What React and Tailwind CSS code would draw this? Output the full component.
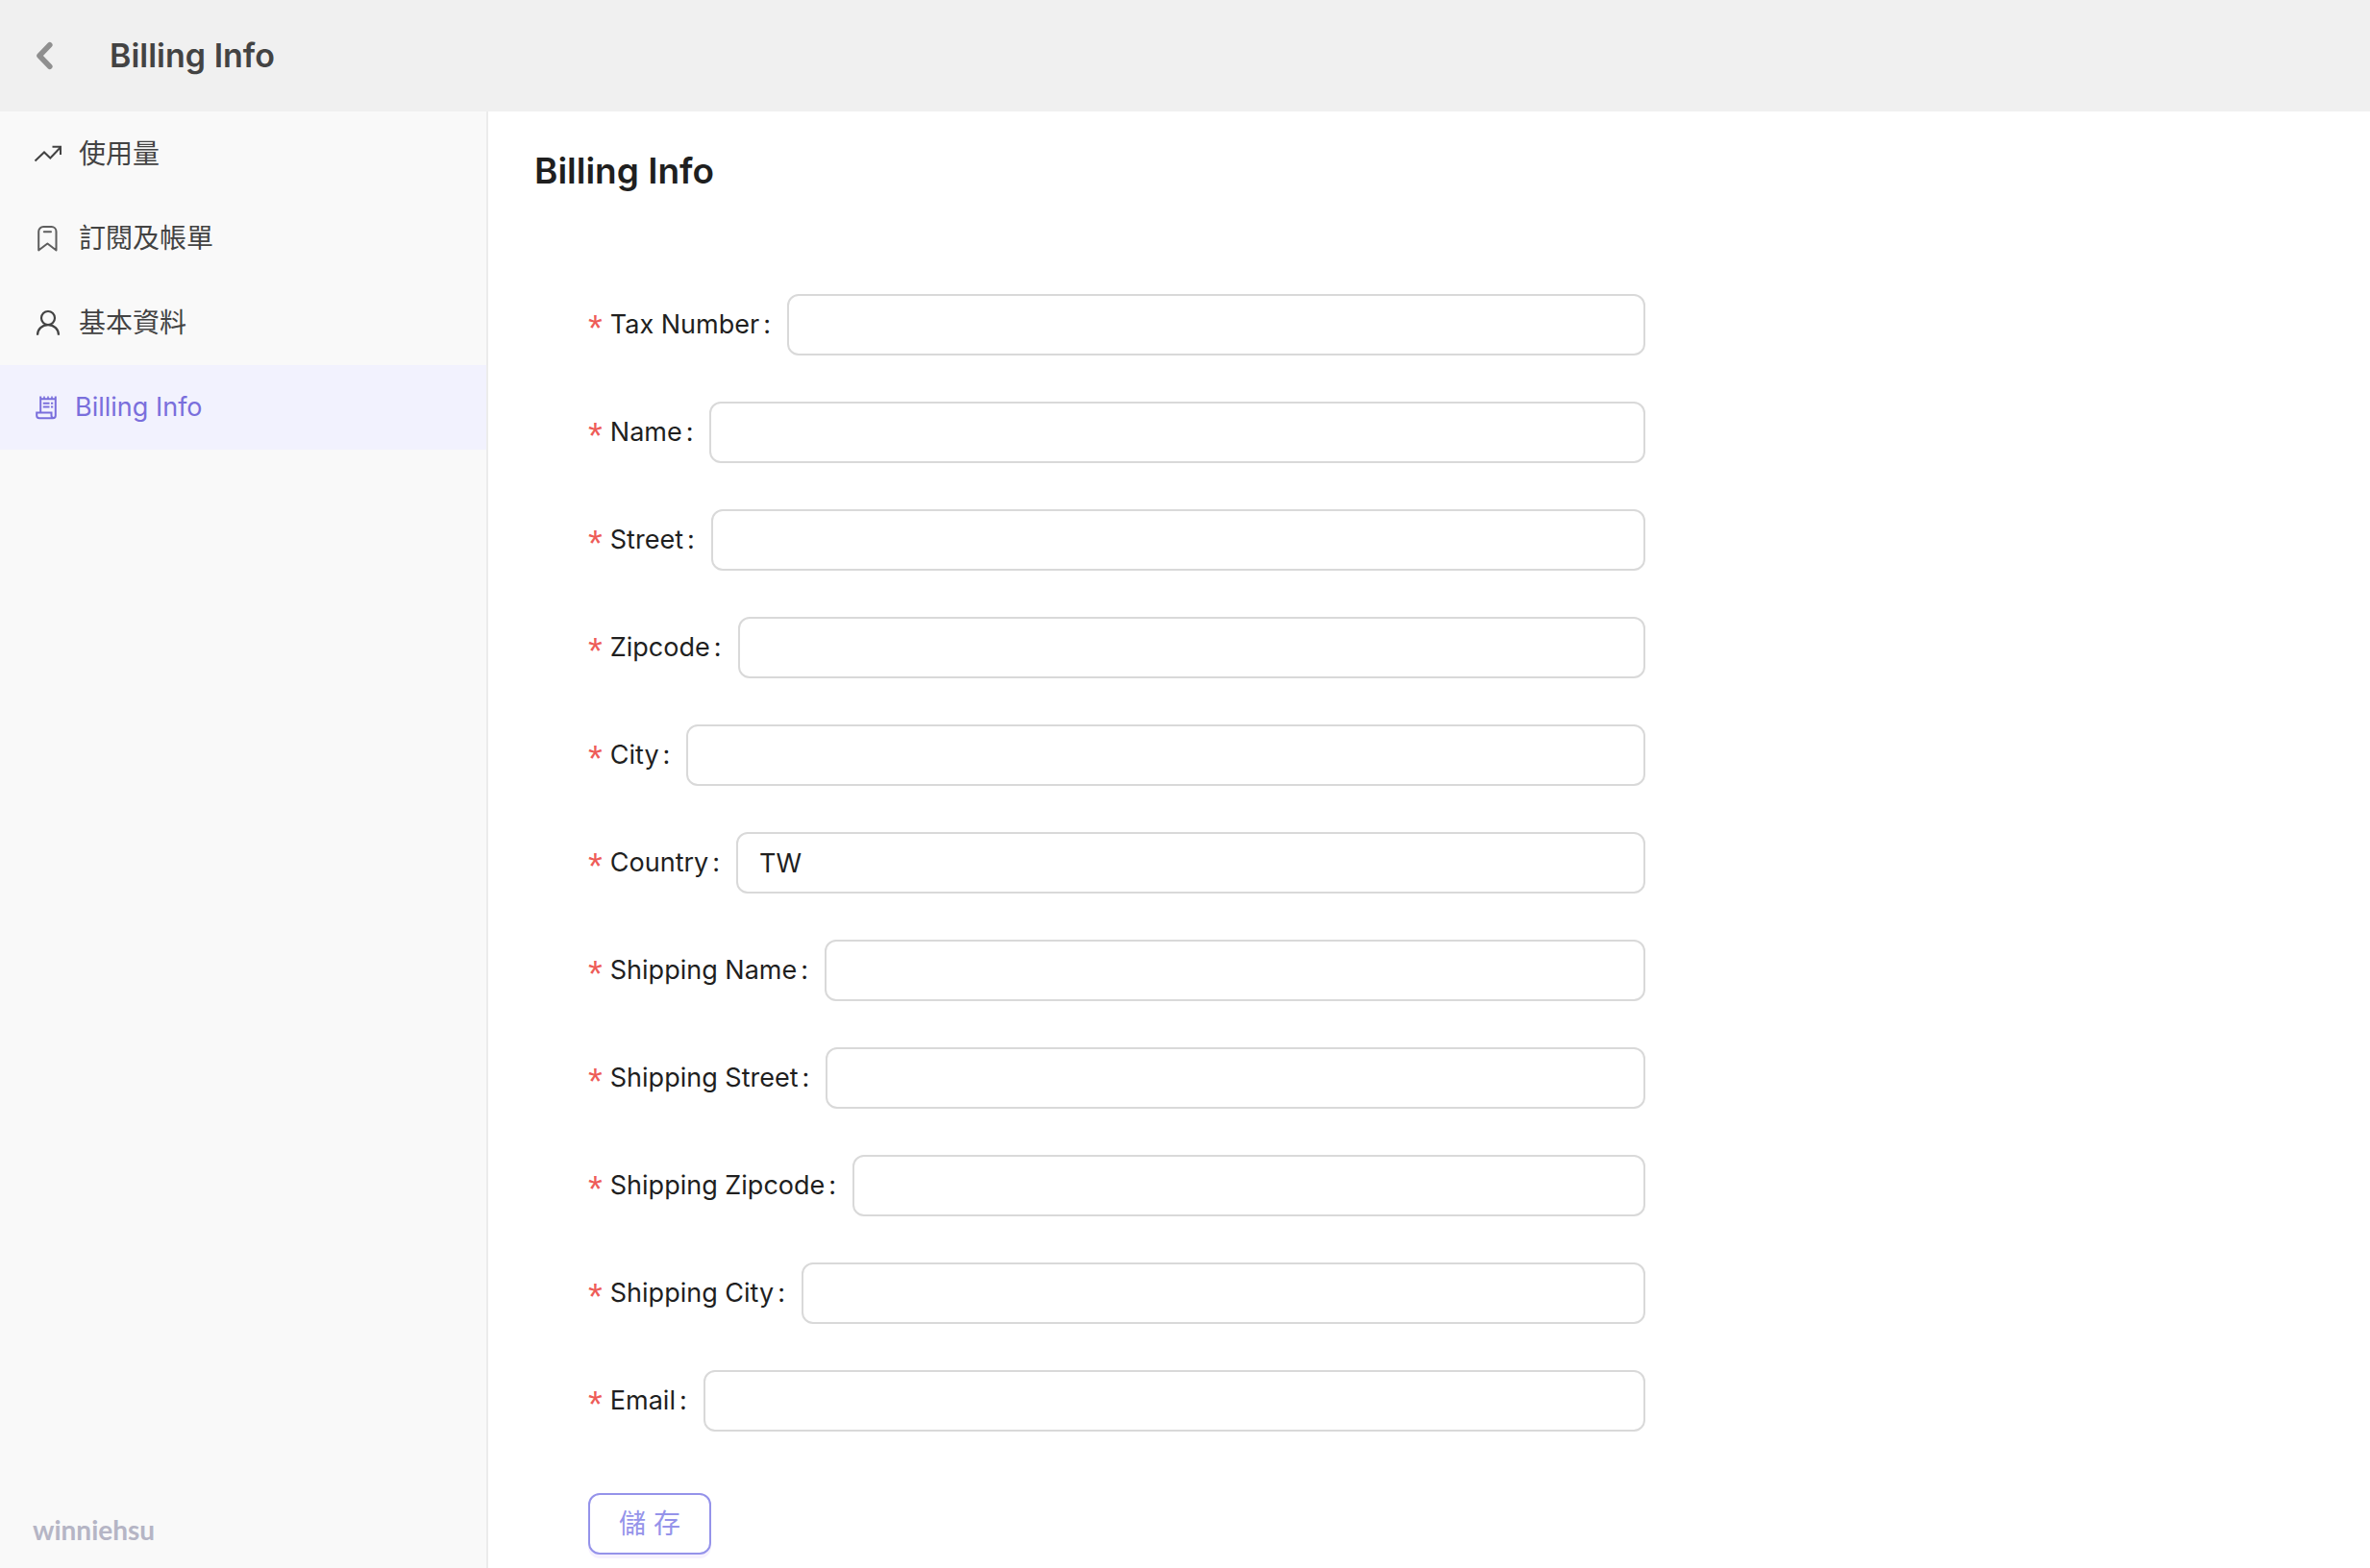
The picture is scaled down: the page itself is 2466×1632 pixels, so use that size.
import React, { useState } from 'react'

const UsageIcon = () => (
  <svg className="h-8 w-8" viewBox="0 0 32 32" fill="none" stroke="currentColor" strokeWidth="2">
    <path d="M2.500 23.500 12 14.500l6.300 6L28.800 9.500M20.500 8.800h8.500V17" />
  </svg>
)

const BookmarkIcon = () => (
  <svg className="h-8 w-8" viewBox="0 0 32 32" fill="none" stroke="currentColor" strokeWidth="2" strokeLinecap="round" strokeLinejoin="round" opacity="0.85">
    <path d="M6.200 28.500V9a5 5 0 0 1 5-5h8.300a5 5 0 0 1 5 5v19.500L15.400 21.500z" />
    <path d="M11.800 9.300h7.200" />
  </svg>
)

const UserIcon = () => (
  <svg className="h-8 w-8" viewBox="0 0 32 32" fill="none" stroke="currentColor" strokeWidth="2.200">
    <circle cx="16" cy="11" r="7" />
    <path d="M5 28.700c0-6 4.800-10.600 11-10.600s11 4.600 11 10.600" />
  </svg>
)

const ReceiptIcon = () => (
  <svg className="h-8 w-8" viewBox="0 0 32 32" fill="none" stroke="currentColor" strokeWidth="2">
    <path d="M8.200 21.500V4.500M23.800 4.500v20a2.800 2.800 0 0 1-2.800 2.800H7a2.800 2.800 0 0 1-2.800-2.800v-3H19.500v3a2.500 2.500 0 0 0 2.500 2.500M8.200 7.200h15.600" />
    <path d="M12 4.500v2.500M16 4.500v2.500M20 4.500v2.500" strokeWidth="1.600" />
    <path d="M10.800 11.800h6.700M10.800 15.500h6.700M19 11.800h2.200M19 15.500h2.200" />
  </svg>
)

const menuItems = [
  { name: '使用量', icon: UsageIcon },
  { name: '訂閱及帳單', icon: BookmarkIcon },
  { name: '基本資料', icon: UserIcon },
  { name: 'Billing Info', icon: ReceiptIcon },
]

const fields = [
  { id: 'taxNumber', label: 'Tax Number' },
  { id: 'name', label: 'Name' },
  { id: 'street', label: 'Street' },
  { id: 'zipcode', label: 'Zipcode' },
  { id: 'city', label: 'City' },
  { id: 'country', label: 'Country' },
  { id: 'shippingName', label: 'Shipping Name' },
  { id: 'shippingStreet', label: 'Shipping Street' },
  { id: 'shippingZipcode', label: 'Shipping Zipcode' },
  { id: 'shippingCity', label: 'Shipping City' },
  { id: 'email', label: 'Email' },
]

const Header = () => (
  <header className="flex h-[116px] items-center bg-[#f0f0f0] px-8">
    <button type="button" aria-label="Back" className="flex h-8 w-8 cursor-pointer items-center justify-center text-[#8f8f8f]">
      <svg className="h-8 w-8" viewBox="0 0 32 32" fill="none" stroke="currentColor" strokeWidth="5.600" strokeLinecap="round" strokeLinejoin="round">
        <path d="M19.800 4.800 9 16l10.800 11.200" />
      </svg>
    </button>
    <span className="ml-[50px] text-[34px] leading-10 font-semibold text-[#434343]">Billing Info</span>
  </header>
)

const Sidebar = ({ active }) => (
  <aside className="flex w-[508px] shrink-0 flex-col border-r-2 border-[#ececec] bg-[#f9f9f9]">
    <nav className="flex flex-col">
      {menuItems.map((item) => {
        const Icon = item.icon
        const isActive = item.name === active
        return (
          <a
            key={item.name}
            href="#"
            aria-current={isActive ? 'page' : undefined}
            className={`flex h-[88px] items-center px-[34px] ${
              isActive
                ? 'gap-3 bg-[#f2f2fe] text-[27px] text-[#7a6fdc]'
                : 'gap-4 text-[28px] text-[#434343]'
            }`}
          >
            <Icon />
            <span>{item.name}</span>
          </a>
        )
      })}
    </nav>
    <div className="mt-auto px-[34px] pb-5 font-['Lato',sans-serif] text-[28px] leading-10 font-bold text-[#b5b5c5]">
      winniehsu
    </div>
  </aside>
)

const Field = ({ id, label, value, onChange }) => (
  <div className="flex items-center">
    <label htmlFor={id} className="flex shrink-0 items-center">
      <span className="mt-2 mr-2 font-['Liberation_Sans',sans-serif] text-[38px] leading-8 text-[#ee5c58]">*</span>
      <span>{label}</span>
      <span className="mr-[17px] ml-1">:</span>
    </label>
    <input
      id={id}
      type="text"
      required
      value={value}
      onChange={onChange}
      className="h-16 min-w-0 flex-1 rounded-xl border-2 border-[#d9d9d9] bg-white px-[22px] outline-none focus:border-[#9593ea]"
    />
  </div>
)

const App = () => {
  const [values, setValues] = useState({ country: 'TW' })

  const handleChange = (id) => (e) => {
    setValues({ ...values, [id]: e.target.value })
  }

  return (
    <div className="flex min-h-screen flex-col bg-white font-['Inter','Noto_Sans_CJK_TC',sans-serif] text-[27px] text-[#1f1f1f]">
      <Header />
      <div className="flex flex-1">
        <Sidebar active="Billing Info" />
        <main className="flex-1 px-12 pt-[34px]">
          <h1 className="text-[37px] leading-[56px] font-semibold">Billing Info</h1>

          <form className="mt-[100px] flex w-full max-w-[1156px] flex-col gap-12 pl-14" onSubmit={(e) => e.preventDefault()}>
            {fields.map((field) => (
              <Field
                key={field.id}
                id={field.id}
                label={field.label}
                value={values[field.id] || ''}
                onChange={handleChange(field.id)}
              />
            ))}

            <button
              type="submit"
              className="mt-4 mb-3 flex h-16 w-32 cursor-pointer items-center justify-center rounded-xl border-2 border-[#9593ea] bg-white text-[28px] text-[#9593ea] shadow-[0_4px_0_#f6f1fe]"
            >
              儲 存
            </button>
          </form>
        </main>
      </div>
    </div>
  )
}

export default App
